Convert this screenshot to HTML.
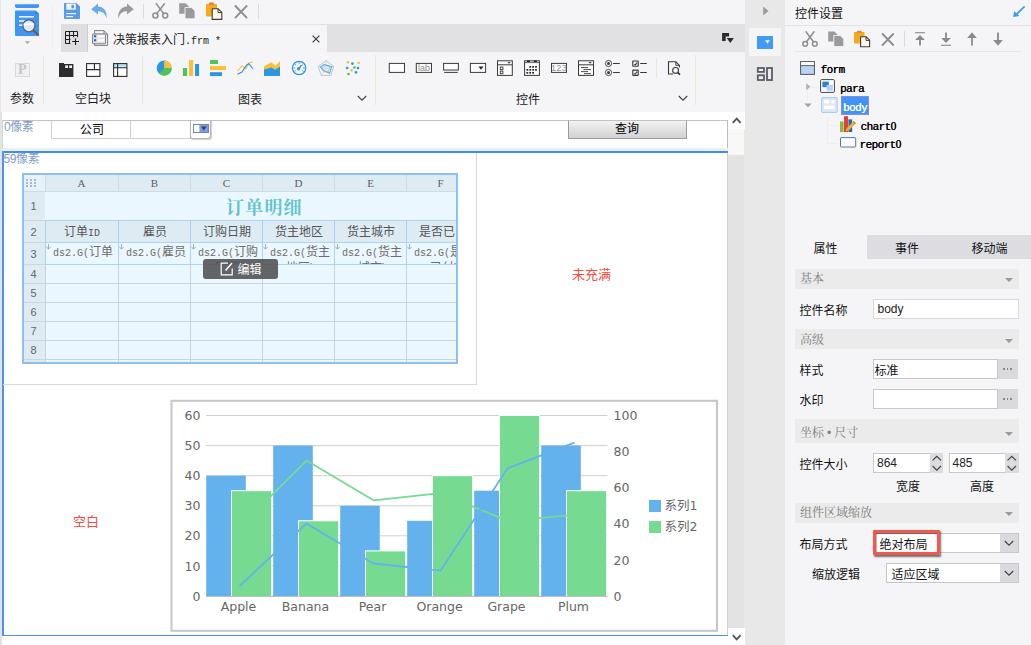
<!DOCTYPE html>
<html lang="zh-CN">
<head>
<meta charset="utf-8">
<title>决策报表入门.frm</title>
<style>
*{box-sizing:border-box;margin:0;padding:0}
html,body{width:1031px;height:645px;overflow:hidden;background:#f5f5f7}
body{position:relative;font-family:"Liberation Sans","Noto Sans CJK SC",sans-serif;font-size:12px;color:#1a1a1a}
.a{position:absolute}
.t{position:absolute;white-space:nowrap;line-height:1}
.cj{font-family:"Liberation Sans","Noto Sans CJK SC",sans-serif}
.sf{font-family:"Liberation Serif","Noto Serif CJK SC",serif}
.mono{font-family:"Liberation Mono","Noto Sans CJK SC",monospace}
svg{position:absolute;overflow:visible}
.vsep{position:absolute;width:1px;background:#ece8d8}
/* right panel */
.sec{position:absolute;left:795px;width:224px;height:19px;background:#ebebeb}
.sec span{position:absolute;left:5px;top:3.5px;font-family:"Liberation Serif","Noto Serif CJK SC",serif;color:#7e7e7e;font-size:12px;line-height:13px;white-space:nowrap}
.sec i{position:absolute;right:6px;top:9px;width:0;height:0;border-left:4px solid transparent;border-right:4px solid transparent;border-top:4px solid #9a9a9a}
.inp{position:absolute;background:#fff;border:1px solid #c8c8cc;height:20px}
.lab{position:absolute;white-space:nowrap;font-size:12px;line-height:14px;color:#111}
.btn3{position:absolute;background:#dadade;height:20px;width:19.5px}
/* report grid */
.gh{position:absolute;background:#deebf3;color:#555;font-size:11px;text-align:center}
</style>
</head>
<body>
<!-- ===== left edge strip ===== -->
<div class="a" style="left:0;top:0;width:1px;height:645px;background:#e6e6e8"></div>


<!-- ===== TOP BAR ===== -->
<!-- app logo -->
<svg style="left:14px;top:3px" width="28" height="44" viewBox="0 0 28 44">
  <path d="M1 1.2 H25 V3.2 a1.8 1.8 0 0 1 -1.8 1.8 H2.8 a1.8 1.8 0 0 1 -1.8 -1.8z" fill="#3f94f5"/>
  <path d="M1 8.5 a1 1 0 0 1 1-1 h19.5 l3.5 3.5 v21 a1 1 0 0 1-1 1 h-22 a1 1 0 0 1-1-1z" fill="#3f94f5"/>
  <path d="M21.5 7.5 l3.5 3.5 h-3.5z" fill="#2f78d6"/>
  <rect x="5" y="13" width="15" height="1.6" fill="#e8f2fe"/>
  <rect x="5" y="17.2" width="6" height="1.6" fill="#e8f2fe"/>
  <rect x="5" y="21.4" width="5" height="1.6" fill="#e8f2fe"/>
  <circle cx="14.9" cy="22.8" r="6" fill="#dcebfb" stroke="#5f6266" stroke-width="1.3"/>
  <rect x="9.6" y="20.4" width="10.6" height="1.8" fill="#ffffff"/>
  <path d="M19.6 27.6 l4.4 4" stroke="#5f6266" stroke-width="2.4" stroke-linecap="round"/>
  <path d="M10.6 38.2 h5.6 l-2.8 2.8z" fill="#a9a9ab"/>
</svg>
<div class="a" style="left:52px;top:5px;width:1px;height:42px;background:#eeeef0"></div>

<!-- save -->
<svg style="left:64px;top:3px" width="16" height="16" viewBox="0 0 16 16">
  <path d="M0.8 0 h11.6 l3.6 3.4 v11.8 a.8 .8 0 0 1-.8 .8 h-14.4 a.8 .8 0 0 1-.8-.8 v-14.4 a.8 .8 0 0 1 .8-.8z" fill="#5b9ce6"/>
  <rect x="2.3" y="0.6" width="9.4" height="6" fill="#f4f8fe"/>
  <rect x="7.4" y="1.8" width="2.6" height="3.6" fill="#5b9ce6"/>
  <rect x="2.2" y="10" width="9.8" height="1.2" fill="#f4f8fe"/>
  <rect x="2.2" y="13" width="6.8" height="1.2" fill="#f4f8fe"/>
</svg>
<!-- undo -->
<svg style="left:91px;top:3px" width="17" height="16" viewBox="0 0 17 16">
  <path d="M7 0.4 L0.2 6.2 L7 11.4 V8.2 C11.5 8.2 14.2 10.5 15.6 15.4 C16.6 8.6 12.8 4 7 3.6 Z" fill="#6aabeb"/>
</svg>
<!-- redo -->
<svg style="left:117px;top:3px" width="17" height="16" viewBox="0 0 17 16">
  <path d="M10 0.4 L16.8 6.2 L10 11.4 V8.2 C5.5 8.2 2.8 10.5 1.4 15.4 C0.4 8.6 4.2 4 10 3.6 Z" fill="#9b9b9d"/>
</svg>
<div class="a" style="left:143px;top:4px;width:1px;height:15px;background:#dcdcde"></div>
<!-- cut -->
<svg style="left:152px;top:3px" width="17" height="16" viewBox="0 0 17 16">
  <g fill="none" stroke="#8e8e90" stroke-width="1.5" stroke-linecap="round">
    <circle cx="3.4" cy="12.6" r="2.5"/><circle cx="13.2" cy="12.6" r="2.5"/>
    <path d="M4.8 10.6 L12.4 0.8"/><path d="M11.8 10.6 L4.2 0.8"/>
  </g>
</svg>
<!-- copy -->
<svg style="left:179px;top:3px" width="17" height="16" viewBox="0 0 17 16">
  <path d="M0.2 0.2 h6.4 l3 3 v7.6 h-9.4z" fill="#9a9a9c"/>
  <path d="M6 4.4 h6.6 l3.4 3.4 v8 h-10z" fill="#9a9a9c" stroke="#f5f5f7" stroke-width="0.9"/>
</svg>
<!-- paste -->
<svg style="left:205px;top:2px" width="18" height="18" viewBox="0 0 18 18">
  <rect x="1" y="2" width="11" height="12.6" rx="0.8" fill="#f4a91f"/>
  <rect x="4" y="0.6" width="5" height="2.2" rx="0.8" fill="#e97b3a"/>
  <path d="M7.2 6.8 h6 l3.6 3.6 v7 h-9.6z" fill="#fff8e8" stroke="#3c3c3c" stroke-width="1.1" stroke-linejoin="round"/>
  <path d="M13 6.8 v3.8 h3.8" fill="none" stroke="#3c3c3c" stroke-width="1"/>
</svg>
<!-- delete -->
<svg style="left:234px;top:5px" width="14" height="14" viewBox="0 0 14 14">
  <path d="M1.4 1 L12.6 12.6 M12.6 1 L1.4 12.6" stroke="#8e8e90" stroke-width="1.9" fill="none" stroke-linecap="round"/>
</svg>
<div class="a" style="left:258px;top:4px;width:1px;height:15px;background:#dcdcde"></div>


<!-- ===== TAB BAR ===== -->
<div class="a" style="left:61px;top:24px;width:684px;height:28px;background:#e1e1e3"></div>
<div class="a" style="left:61px;top:24px;width:27px;height:28px;background:#dedee0"></div>
<div class="a" style="left:88px;top:25px;width:239px;height:27px;background:#f5f5f7"></div>
<div class="a" style="left:87px;top:24px;width:1px;height:28px;background:#cdcdcf"></div>
<!-- grid+ icon -->
<svg style="left:65px;top:31px" width="15" height="15" viewBox="65 31 15 15">
  <g fill="none" stroke="#1e1e1e" stroke-width="1">
    <path d="M65.5 31.5 H77.5 V37.2 M65.5 31.5 V43.5 H70.4 M69.5 31.5 V43.5 M73.5 31.5 V37.2 M65.5 35.5 H77.5 M65.5 39.5 H70.4"/>
    <path d="M75.5 38.4 V45 M72.2 41.5 H79" stroke-width="1.1"/>
  </g>
</svg>
<!-- doc icon -->
<svg style="left:92px;top:30px" width="17" height="16" viewBox="92 30 17 16">
  <path d="M94.6 30.6 h9.4 l3.6 3.6 v11.2 h-13z" fill="#f6f6f6" stroke="#7c7c7c" stroke-width="1"/>
  <path d="M104 30.6 v3.6 h3.6" fill="none" stroke="#7c7c7c" stroke-width="0.9"/>
  <rect x="92.6" y="33.9" width="13" height="9.9" rx="0.6" fill="#e4e4e6" stroke="#7c7c7c" stroke-width="1"/>
  <rect x="97.6" y="35.2" width="6.8" height="2.2" fill="#fafafa"/>
  <rect x="97.6" y="39.3" width="6.8" height="2.2" fill="#fafafa"/>
  <rect x="94" y="35.2" width="2.2" height="2.1" fill="#1f63c9"/>
  <rect x="94" y="39.2" width="2.2" height="2.1" fill="#1f63c9"/>
</svg>
<div class="t" style="left:113px;top:32.7px;font-size:12px;line-height:14px;color:#222"><span class="cj">决策报表入门</span><span class="mono" style="font-size:10px;letter-spacing:0">.frm *</span></div>
<svg style="left:312px;top:34.5px" width="8" height="8" viewBox="0 0 8 8"><path d="M0.6 0.6 L7.4 7.4 M7.4 0.6 L0.6 7.4" stroke="#333" stroke-width="1.1" fill="none"/></svg>
<!-- tab list dropdown icon -->
<svg style="left:722px;top:33px" width="12" height="10" viewBox="0 0 12 10">
  <path d="M0.1 0 h7 v3.4 h-3.4 v4.5 h-3.6z" fill="#2b2b2b"/>
  <path d="M4.7 5 h7.2 l-3.6 5z" fill="#2b2b2b"/>
</svg>


<!-- ===== WIDGET BAR ===== -->
<!-- param P -->
<div class="a" style="left:15px;top:63px;width:15px;height:14px;border:1px solid #d9d9db;background:#f0f0f1"></div>
<div class="t sf" style="left:18px;top:63px;font-size:14px;line-height:14px;color:#c4c4c6;font-weight:700">P</div>
<div class="t cj" style="left:10px;top:92px;font-size:12px;line-height:14px">参数</div>
<div class="vsep" style="left:43px;top:55px;height:50px"></div>
<!-- blank block icons -->
<svg style="left:59px;top:63px" width="15" height="14" viewBox="0 0 15 14">
  <path d="M0 0 h5 v1 h9.4 v13 h-14.4z" fill="#2d2d2d"/>
  <rect x="6.2" y="2.4" width="2.8" height="2.6" fill="#f5f5f7"/><rect x="10.2" y="2.4" width="2.8" height="2.6" fill="#f5f5f7"/>
</svg>
<svg style="left:86px;top:63px" width="15" height="14" viewBox="0 0 15 14">
  <g fill="#fff" stroke="#2d2d2d" stroke-width="1.1"><rect x="0.6" y="0.6" width="13.3" height="12.8"/><path d="M0.6 6.6 H13.9 M8.4 0.6 V6.6" fill="none"/></g>
</svg>
<svg style="left:113px;top:63px" width="15" height="14" viewBox="0 0 15 14">
  <rect x="0.6" y="0.6" width="13.3" height="12.8" fill="#fff"/>
  <rect x="0.6" y="0.6" width="13.3" height="4.2" fill="#b9e6f8"/>
  <g fill="none" stroke="#2d2d2d" stroke-width="1.1"><rect x="0.6" y="0.6" width="13.3" height="12.8"/><path d="M0.6 4.8 H13.9 M4.6 0.6 V13.4"/></g>
</svg>
<div class="t cj" style="left:75px;top:92px;font-size:12px;line-height:14px">空白块</div>
<div class="vsep" style="left:142px;top:55px;height:50px"></div>

<!-- chart icons -->
<svg style="left:156px;top:60px" width="17" height="17" viewBox="0 0 17 17">
  <circle cx="8.2" cy="8" r="7.5" fill="#2b96e4"/>
  <path d="M8.2 8 L8.2 0.5 A7.5 7.5 0 0 1 15.7 8.4 Z" fill="#fbc035"/>
  <path d="M8.2 8 L15.7 8.4 A7.5 7.5 0 0 1 3.2 13.6 Z" fill="#4bc657"/>
</svg>
<svg style="left:182px;top:60px" width="18" height="17" viewBox="0 0 18 17">
  <rect x="0.9" y="8" width="4.2" height="8" fill="#4bc657"/><rect x="7" y="0" width="4.2" height="16" fill="#fbc035"/><rect x="13" y="4" width="4.1" height="12" fill="#2b96e4"/>
</svg>
<svg style="left:210px;top:60px" width="17" height="17" viewBox="0 0 17 17">
  <rect x="0" y="0" width="8" height="4" fill="#4bc657"/><rect x="0" y="6.1" width="16" height="4" fill="#fbc035"/><rect x="0" y="12.2" width="12" height="3.9" fill="#2b96e4"/>
</svg>
<svg style="left:237px;top:60px" width="17" height="17" viewBox="0 0 17 17">
  <path d="M0.4 11 L5 6 L9 8.6 L12 2.8 L16 2" fill="none" stroke="#fbc035" stroke-width="1.1"/>
  <path d="M0.4 14.2 L5 12 L9.6 5 L12 3.8 L16 9" fill="none" stroke="#2b96e4" stroke-width="1.1"/>
</svg>
<svg style="left:264px;top:60px" width="17" height="17" viewBox="0 0 17 17">
  <path d="M0 6.3 L7.6 2.3 L11.4 6 L16 1 V16 H0z" fill="#fbc035"/>
  <path d="M0 9.5 L7.6 7.4 L11 9.8 L16 6.4 V16 H0z" fill="#2b96e4"/>
</svg>
<svg style="left:291px;top:60px" width="17" height="17" viewBox="0 0 17 17">
  <circle cx="8.1" cy="8" r="6.7" fill="none" stroke="#2b96e4" stroke-width="1.2"/>
  <circle cx="7.6" cy="8.8" r="1.7" fill="#2b96e4"/>
  <path d="M7.8 8.6 L10.6 5" stroke="#2b96e4" stroke-width="1.3"/>
  <g stroke="#2b96e4" stroke-width="0.9"><path d="M2.4 8 h1.8 M12 8 h1.8 M8.1 2.2 v1.6 M3.8 4 l1.2 1.2 M12.4 4 l-1.2 1.2 M3.4 11.4 l1.4 -0.8 M12.8 11.4 l-1.4 -0.8"/></g>
</svg>
<svg style="left:318px;top:60px" width="17" height="17" viewBox="0 0 17 17">
  <g fill="none" stroke="#c6c6c8" stroke-width="1"><path d="M8 0.6 L15.8 6.4 L12.8 15.4 H3.2 L0.2 6.4 Z"/><path d="M8 5 L11.6 7.6 L10.2 11.8 H5.8 L4.4 7.6Z"/><path d="M8 8.6 L8 0.6 M8 8.6 L15.8 6.4 M8 8.6 L12.8 15.4 M8 8.6 L3.2 15.4 M8 8.6 L0.2 6.4" stroke-width="0.6"/></g>
  <path d="M6 4.6 L13.6 6.6 L11.6 13.2 L5.4 10.6 L2.6 6.8 Z" fill="none" stroke="#55b4f0" stroke-width="1.2"/>
</svg>
<svg style="left:346px;top:60px" width="16" height="17" viewBox="0 0 16 17">
  <g fill="#fbc035"><circle cx="2" cy="2.3" r="1.35"/><circle cx="12.8" cy="3" r="1.35"/><circle cx="5.6" cy="10.3" r="1.35"/></g>
  <g fill="#2b96e4"><circle cx="6.4" cy="3.6" r="1.35"/><circle cx="1.2" cy="8" r="1.35"/><circle cx="12" cy="8" r="1.35"/><circle cx="10" cy="12.3" r="1.35"/></g>
  <g fill="#4bc657"><circle cx="8.5" cy="7.5" r="1.35"/><circle cx="2.5" cy="14" r="1.35"/></g>
</svg>
<div class="t cj" style="left:238px;top:93px;font-size:12px;line-height:14px">图表</div>
<svg style="left:357px;top:95px" width="10" height="7" viewBox="0 0 10 7"><path d="M0.8 1 L5 5.2 L9.2 1" fill="none" stroke="#444" stroke-width="1.2"/></svg>
<div class="vsep" style="left:375px;top:55px;height:50px"></div>

<!-- widget icons -->
<svg style="left:388px;top:62px" width="18" height="12" viewBox="0 0 18 12"><rect x="1.3" y="1.4" width="15.2" height="9" fill="#fdfdfd" stroke="#3a3a3a" stroke-width="1"/></svg>
<svg style="left:415px;top:62px" width="18" height="12" viewBox="0 0 18 12"><rect x="1.3" y="1.4" width="15.2" height="9" fill="#fdfdfd" stroke="#3a3a3a" stroke-width="1"/>
  <text x="8.9" y="9" font-family="Liberation Sans, sans-serif" font-size="9" fill="#8e8e90" text-anchor="middle">lab</text></svg>
<svg style="left:442px;top:62px" width="18" height="12" viewBox="0 0 18 12"><rect x="1.6" y="1.4" width="14.8" height="6.6" fill="#fdfdfd" stroke="#3a3a3a" stroke-width="1"/><path d="M2.2 10.4 H15.8" stroke="#3a3a3a" stroke-width="1"/></svg>
<svg style="left:469px;top:62px" width="18" height="12" viewBox="0 0 18 12"><rect x="1.4" y="1.4" width="15.2" height="9" fill="#fdfdfd" stroke="#3a3a3a" stroke-width="1"/><path d="M9.4 4.6 h5.2 l-2.6 3.2z" fill="#2a2a2a"/></svg>
<svg style="left:496px;top:60px" width="18" height="17" viewBox="0 0 18 17">
  <rect x="1.5" y="0.8" width="14.8" height="14.6" fill="#fdfdfd" stroke="#3a3a3a" stroke-width="1"/>
  <path d="M1.5 4.8 H16.3" stroke="#3a3a3a" stroke-width="1"/><path d="M11.4 2 h3.2 l-1.6 1.7z" fill="#3a3a3a"/>
  <rect x="4.3" y="7.1" width="2.6" height="2.6" fill="none" stroke="#3a3a3a" stroke-width="0.9"/><rect x="4.3" y="11.1" width="2.6" height="2.6" fill="none" stroke="#3a3a3a" stroke-width="0.9"/>
</svg>
<svg style="left:523px;top:60px" width="18" height="17" viewBox="0 0 18 17">
  <rect x="1.6" y="0.8" width="14.8" height="14.6" fill="#fdfdfd" stroke="#3a3a3a" stroke-width="1"/>
  <path d="M1.6 2.6 H16.4" stroke="#3a3a3a" stroke-width="0.8"/>
  <path d="M4 1.2 h3 M10.8 1.2 h3" stroke="#222" stroke-width="1.4"/>
  <g fill="#2a2a2a"><rect x="6.3" y="6" width="1.8" height="1.7"/><rect x="9.2" y="6" width="1.8" height="1.7"/><rect x="12.1" y="6" width="1.8" height="1.7"/>
  <rect x="3.4" y="9" width="1.8" height="1.7"/><rect x="6.3" y="9" width="1.8" height="1.7"/><rect x="9.2" y="9" width="1.8" height="1.7"/><rect x="12.1" y="9" width="1.8" height="1.7"/>
  <rect x="3.4" y="12" width="1.8" height="1.7"/><rect x="6.3" y="12" width="1.8" height="1.7"/><rect x="9.2" y="12" width="1.8" height="1.7"/></g>
</svg>
<svg style="left:550px;top:62px" width="18" height="12" viewBox="0 0 18 12"><rect x="1.5" y="1.4" width="15" height="9" fill="#fdfdfd" stroke="#3a3a3a" stroke-width="1"/>
  <text x="9" y="9.2" font-family="Liberation Sans, sans-serif" font-size="9" fill="#8e8e90" text-anchor="middle" letter-spacing="0.3">123</text></svg>
<svg style="left:577px;top:60px" width="18" height="17" viewBox="0 0 18 17">
  <rect x="1.5" y="0.8" width="15" height="14.6" fill="#fdfdfd" stroke="#3a3a3a" stroke-width="1"/>
  <path d="M1.5 4.8 H16.5" stroke="#3a3a3a" stroke-width="1"/><path d="M11.6 2 h3.2 l-1.6 1.7z" fill="#3a3a3a"/>
  <path d="M4 7.6 H11 M6.4 9.6 H14 M4 11.6 H11 M7 13.6 H14" stroke="#3a3a3a" stroke-width="0.9"/>
</svg>
<svg style="left:604px;top:59px" width="18" height="18" viewBox="0 0 18 18">
  <g fill="none" stroke="#3a3a3a" stroke-width="0.9"><circle cx="4.5" cy="4.5" r="3.1"/><circle cx="4.5" cy="13.5" r="3.1"/><path d="M9 4.5 H15.8 M9 13.5 H15.8" stroke-width="1"/></g>
  <circle cx="4.5" cy="4.5" r="1.5" fill="#3a3a3a"/><circle cx="4.5" cy="13.5" r="1.5" fill="#3a3a3a"/>
</svg>
<svg style="left:631px;top:59px" width="18" height="18" viewBox="0 0 18 18">
  <g fill="none" stroke="#3a3a3a" stroke-width="1"><rect x="1.8" y="2" width="5.4" height="5.2" rx="0.2" stroke-width="1.15"/><rect x="1.8" y="11.1" width="5.4" height="5.2" rx="0.2" stroke-width="1.15"/><path d="M9.2 4.5 H15.8 M9.2 13.5 H15.8"/>
  <path d="M3.2 5.4 l1 0.6 l1.8 -2.4 M3.2 14.5 l1 0.6 l1.8 -2.4" stroke-width="1.1"/></g>
</svg>
<div class="vsep" style="left:656px;top:58px;height:20px"></div>
<svg style="left:667px;top:61px" width="15" height="15" viewBox="0 0 15 15">
  <path d="M6 13 H1.5 V0.8 H8.8 L12.4 4.4 V6.6" fill="none" stroke="#3a3a3a" stroke-width="1.1"/>
  <path d="M8.8 0.8 V4.4 H12.4" fill="none" stroke="#3a3a3a" stroke-width="0.9"/>
  <circle cx="8.6" cy="9.4" r="2.9" fill="#fdfdfd" stroke="#3a3a3a" stroke-width="1.1"/>
  <path d="M10.8 11.6 L13 13.6" stroke="#2a2a2a" stroke-width="1.5"/>
</svg>
<div class="t cj" style="left:516px;top:93px;font-size:12px;line-height:14px">控件</div>
<svg style="left:678px;top:95px" width="10" height="7" viewBox="0 0 10 7"><path d="M0.8 1 L5 5.2 L9.2 1" fill="none" stroke="#444" stroke-width="1.2"/></svg>
<div class="vsep" style="left:695px;top:55px;height:50px"></div>

<!-- ===== CANVAS ===== -->
<div class="a" style="left:1px;top:112px;width:744px;height:533px;background:#fff"></div>
<div class="a" style="left:0;top:112px;width:2px;height:533px;background:#e2e2e2"></div>
<div class="a" style="left:2px;top:120px;width:726px;height:1px;background:#c2c2c2"></div>
<div class="a" style="left:727px;top:120px;width:1px;height:516px;background:#d4d1c6"></div>
<div class="a" style="left:727px;top:120px;width:1px;height:32px;background:#bdbdbd"></div>
<div class="a" style="left:2px;top:120px;width:1px;height:31px;background:#d5d5d5"></div>
<div class="t cj" style="left:4px;top:120.5px;font-size:12px;line-height:13px;color:#7f9fc4;letter-spacing:-0.4px">0像素</div>
<div class="a" style="left:51px;top:120px;width:80px;height:19px;border:1px solid #d0d0d0;border-top-color:#c2c2c2;background:#fff"></div>
<div class="t cj" style="left:80px;top:122.5px;font-size:12px;line-height:14px;color:#000;font-weight:400">公司</div>
<div class="a" style="left:130px;top:120px;width:61px;height:19px;border:1px solid #d0d0d0;border-top-color:#c2c2c2;background:#fff"></div>
<div class="a" style="left:190px;top:120px;width:21px;height:19px;border:1px solid #b4b4b4;border-top-color:#c2c2c2;border-radius:0 0 3px 3px;background:#fff;box-shadow:0.5px 1px 1px rgba(0,0,0,.18)"></div>
<svg style="left:193px;top:124px" width="16" height="9" viewBox="0 0 16 9"><rect x="0.5" y="0.5" width="15" height="8" fill="#fff" stroke="#6f86b8" stroke-width="1"/><rect x="6.4" y="1" width="8.6" height="7" fill="#7f9bd8"/><path d="M8 2.6 h5.6 l-2.8 3.8z" fill="#283c80"/></svg>
<div class="a" style="left:568px;top:120px;width:119px;height:19px;border:1px solid #9c9c9c;border-top-color:#c2c2c2;background:linear-gradient(#f2f2f2,#d2d2d2)"></div>
<div class="t cj" style="left:615px;top:122px;font-size:12px;line-height:14px;color:#000">查询</div>
<div class="a" style="left:2px;top:148px;width:726px;height:3px;background:#e7f1fb"></div>
<div class="a" style="left:2px;top:151px;width:726px;height:2px;background:#3f8eee"></div>
<div class="a" style="left:2px;top:151px;width:1.5px;height:485px;background:#4d95ec"></div>
<div class="a" style="left:2px;top:635px;width:726px;height:1.3px;background:#4d95ec"></div>
<div class="t cj" style="left:3.5px;top:153px;font-size:12px;line-height:13px;color:#7f9fc4;letter-spacing:-0.4px">59像素</div>
<div class="a" style="left:476px;top:153px;width:1px;height:232px;background:#d9d9d9"></div>
<div class="a" style="left:3px;top:384px;width:474px;height:1px;background:#d9d9d9"></div>
<div class="t cj" style="left:572px;top:267.5px;font-size:13px;line-height:14px;color:#fb4a3c">未充满</div>
<div class="t cj" style="left:73px;top:514.5px;font-size:13px;line-height:14px;color:#fb4a3c">空白</div>
<div class="a" id="rep" style="left:22px;top:173px;width:436px;height:191px;background:#ebf7fe;overflow:hidden">
<div class="a" style="left:2px;top:2px;width:432px;height:16px;background:#deebf2"></div>
<div class="a" style="left:2px;top:2px;width:21px;height:16px;background:#e6f2fa"></div>
<div class="a" style="left:2px;top:18px;width:21px;height:172px;background:#deebf2"></div>
<div class="a" style="left:24px;top:48px;width:410px;height:21px;background:#deebf3"></div>
<div class="a" style="left:23px;top:2px;width:1px;height:16px;background:#cfdbe3"></div>
<div class="a" style="left:96px;top:2px;width:1px;height:16px;background:#cfdbe3"></div>
<div class="a" style="left:168px;top:2px;width:1px;height:16px;background:#cfdbe3"></div>
<div class="a" style="left:240px;top:2px;width:1px;height:16px;background:#cfdbe3"></div>
<div class="a" style="left:312px;top:2px;width:1px;height:16px;background:#cfdbe3"></div>
<div class="a" style="left:384px;top:2px;width:1px;height:16px;background:#cfdbe3"></div>
<div class="a" style="left:2px;top:18px;width:432px;height:1px;background:#cfdbe3"></div>
<div class="a" style="left:2px;top:47px;width:21px;height:1px;background:#cdd6dc"></div>
<div class="a" style="left:2px;top:69px;width:21px;height:1px;background:#cdd6dc"></div>
<div class="a" style="left:2px;top:91px;width:21px;height:1px;background:#cdd6dc"></div>
<div class="a" style="left:2px;top:110px;width:21px;height:1px;background:#cdd6dc"></div>
<div class="a" style="left:2px;top:129px;width:21px;height:1px;background:#cdd6dc"></div>
<div class="a" style="left:2px;top:148px;width:21px;height:1px;background:#cdd6dc"></div>
<div class="a" style="left:2px;top:167px;width:21px;height:1px;background:#cdd6dc"></div>
<div class="a" style="left:2px;top:186px;width:21px;height:1px;background:#cdd6dc"></div>
<div class="a" style="left:24px;top:110px;width:410px;height:1px;background:#ccd4d9"></div>
<div class="a" style="left:24px;top:129px;width:410px;height:1px;background:#ccd4d9"></div>
<div class="a" style="left:24px;top:148px;width:410px;height:1px;background:#ccd4d9"></div>
<div class="a" style="left:24px;top:167px;width:410px;height:1px;background:#ccd4d9"></div>
<div class="a" style="left:24px;top:186px;width:410px;height:1px;background:#ccd4d9"></div>
<div class="a" style="left:23px;top:92px;width:1px;height:98px;background:#ccd4d9"></div>
<div class="a" style="left:96px;top:92px;width:1px;height:98px;background:#ccd4d9"></div>
<div class="a" style="left:168px;top:92px;width:1px;height:98px;background:#ccd4d9"></div>
<div class="a" style="left:240px;top:92px;width:1px;height:98px;background:#ccd4d9"></div>
<div class="a" style="left:312px;top:92px;width:1px;height:98px;background:#ccd4d9"></div>
<div class="a" style="left:384px;top:92px;width:1px;height:98px;background:#ccd4d9"></div>
<div class="a" style="left:23px;top:47px;width:411px;height:1px;background:#a9d4f6"></div>
<div class="a" style="left:23px;top:69px;width:411px;height:1px;background:#a9d4f6"></div>
<div class="a" style="left:23px;top:91px;width:411px;height:1px;background:#a9d4f6"></div>
<div class="a" style="left:23px;top:47px;width:1px;height:45px;background:#a9d4f6"></div>
<div class="a" style="left:96px;top:47px;width:1px;height:45px;background:#a9d4f6"></div>
<div class="a" style="left:168px;top:47px;width:1px;height:45px;background:#a9d4f6"></div>
<div class="a" style="left:240px;top:47px;width:1px;height:45px;background:#a9d4f6"></div>
<div class="a" style="left:312px;top:47px;width:1px;height:45px;background:#a9d4f6"></div>
<div class="a" style="left:384px;top:47px;width:1px;height:45px;background:#a9d4f6"></div>
<div class="a" style="left:3.8px;top:6px;width:2px;height:1.8px;background:#a8b8c9"></div>
<div class="a" style="left:3.8px;top:9px;width:2px;height:1.8px;background:#a8b8c9"></div>
<div class="a" style="left:3.8px;top:12px;width:2px;height:1.8px;background:#a8b8c9"></div>
<div class="a" style="left:8px;top:6px;width:2px;height:1.8px;background:#a8b8c9"></div>
<div class="a" style="left:8px;top:9px;width:2px;height:1.8px;background:#a8b8c9"></div>
<div class="a" style="left:8px;top:12px;width:2px;height:1.8px;background:#a8b8c9"></div>
<div class="a" style="left:12.2px;top:6px;width:2px;height:1.8px;background:#a8b8c9"></div>
<div class="a" style="left:12.2px;top:9px;width:2px;height:1.8px;background:#a8b8c9"></div>
<div class="a" style="left:12.2px;top:12px;width:2px;height:1.8px;background:#a8b8c9"></div>
<div class="t sf" style="left:49.5px;top:4px;width:20px;text-align:center;font-size:11px;line-height:12px;color:#5e5e5e">A</div>
<div class="t sf" style="left:122.5px;top:4px;width:20px;text-align:center;font-size:11px;line-height:12px;color:#5e5e5e">B</div>
<div class="t sf" style="left:194.5px;top:4px;width:20px;text-align:center;font-size:11px;line-height:12px;color:#5e5e5e">C</div>
<div class="t sf" style="left:266.5px;top:4px;width:20px;text-align:center;font-size:11px;line-height:12px;color:#5e5e5e">D</div>
<div class="t sf" style="left:338.5px;top:4px;width:20px;text-align:center;font-size:11px;line-height:12px;color:#5e5e5e">E</div>
<div class="t sf" style="left:408.5px;top:4px;width:20px;text-align:center;font-size:11px;line-height:12px;color:#5e5e5e">F</div>
<div class="t" style="left:2.5px;top:27px;width:18px;text-align:center;font-size:11px;line-height:12px;color:#666;font-family:'Liberation Sans',sans-serif">1</div>
<div class="t" style="left:2.5px;top:52.5px;width:18px;text-align:center;font-size:11px;line-height:12px;color:#666;font-family:'Liberation Sans',sans-serif">2</div>
<div class="t" style="left:2.5px;top:74.5px;width:18px;text-align:center;font-size:11px;line-height:12px;color:#666;font-family:'Liberation Sans',sans-serif">3</div>
<div class="t" style="left:2.5px;top:95px;width:18px;text-align:center;font-size:11px;line-height:12px;color:#666;font-family:'Liberation Sans',sans-serif">4</div>
<div class="t" style="left:2.5px;top:114px;width:18px;text-align:center;font-size:11px;line-height:12px;color:#666;font-family:'Liberation Sans',sans-serif">5</div>
<div class="t" style="left:2.5px;top:133px;width:18px;text-align:center;font-size:11px;line-height:12px;color:#666;font-family:'Liberation Sans',sans-serif">6</div>
<div class="t" style="left:2.5px;top:152px;width:18px;text-align:center;font-size:11px;line-height:12px;color:#666;font-family:'Liberation Sans',sans-serif">7</div>
<div class="t" style="left:2.5px;top:171px;width:18px;text-align:center;font-size:11px;line-height:12px;color:#666;font-family:'Liberation Sans',sans-serif">8</div>
<div class="t sf" style="left:204px;top:24.5px;font-size:18px;line-height:20px;color:#5fc4cd;font-weight:700;letter-spacing:1.2px">订单明细</div>
<div class="t cj" style="left:24px;top:52px;width:72px;text-align:center;font-size:12px;line-height:14px;color:#555">订单<span class="mono" style="font-size:10px">ID</span></div>
<div class="t cj" style="left:97px;top:52px;width:72px;text-align:center;font-size:12px;line-height:14px;color:#555">雇员</div>
<div class="t cj" style="left:169px;top:52px;width:72px;text-align:center;font-size:12px;line-height:14px;color:#555">订购日期</div>
<div class="t cj" style="left:241px;top:52px;width:72px;text-align:center;font-size:12px;line-height:14px;color:#555">货主地区</div>
<div class="t cj" style="left:313px;top:52px;width:72px;text-align:center;font-size:12px;line-height:14px;color:#555">货主城市</div>
<div class="t cj" style="left:397px;top:52px;width:36px;overflow:hidden;font-size:12px;line-height:14px;color:#555">是否已付</div>
<div class="a" style="left:24px;top:70px;width:72px;height:21px;overflow:hidden"><div class="t" style="left:1px;top:1.5px;width:72px;text-align:center;font-size:12px;line-height:14px;color:#6d6d6d;white-space:normal"><span class="mono" style="font-size:10px">ds2.G(</span><span class="cj">订单</span><br><span class="mono" style="font-size:10px">ID)</span></div></div>
<svg style="left:24px;top:70.5px" width="5" height="6" viewBox="0 0 5 6"><path d="M2.5 0 V5 M0.4 2.8 L2.5 5.2 L4.6 2.8" fill="none" stroke="#9a9a9a" stroke-width="0.8"/></svg>
<div class="a" style="left:97px;top:70px;width:72px;height:21px;overflow:hidden"><div class="t" style="left:1px;top:1.5px;width:72px;text-align:center;font-size:12px;line-height:14px;color:#6d6d6d;white-space:normal"><span class="mono" style="font-size:10px">ds2.G(</span><span class="cj">雇员</span><br><span class="mono" style="font-size:10px">ID)</span></div></div>
<svg style="left:97px;top:70.5px" width="5" height="6" viewBox="0 0 5 6"><path d="M2.5 0 V5 M0.4 2.8 L2.5 5.2 L4.6 2.8" fill="none" stroke="#9a9a9a" stroke-width="0.8"/></svg>
<div class="a" style="left:169px;top:70px;width:72px;height:21px;overflow:hidden"><div class="t" style="left:1px;top:1.5px;width:72px;text-align:center;font-size:12px;line-height:14px;color:#6d6d6d;white-space:normal"><span class="mono" style="font-size:10px">ds2.G(</span><span class="cj">订购</span><br><span class="cj">日期)</span></div></div>
<svg style="left:169px;top:70.5px" width="5" height="6" viewBox="0 0 5 6"><path d="M2.5 0 V5 M0.4 2.8 L2.5 5.2 L4.6 2.8" fill="none" stroke="#9a9a9a" stroke-width="0.8"/></svg>
<div class="a" style="left:241px;top:70px;width:72px;height:21px;overflow:hidden"><div class="t" style="left:1px;top:1.5px;width:72px;text-align:center;font-size:12px;line-height:14px;color:#6d6d6d;white-space:normal"><span class="mono" style="font-size:10px">ds2.G(</span><span class="cj">货主</span><br><span class="cj">地区)</span></div></div>
<svg style="left:241px;top:70.5px" width="5" height="6" viewBox="0 0 5 6"><path d="M2.5 0 V5 M0.4 2.8 L2.5 5.2 L4.6 2.8" fill="none" stroke="#9a9a9a" stroke-width="0.8"/></svg>
<div class="a" style="left:313px;top:70px;width:72px;height:21px;overflow:hidden"><div class="t" style="left:1px;top:1.5px;width:72px;text-align:center;font-size:12px;line-height:14px;color:#6d6d6d;white-space:normal"><span class="mono" style="font-size:10px">ds2.G(</span><span class="cj">货主</span><br><span class="cj">城市)</span></div></div>
<svg style="left:313px;top:70.5px" width="5" height="6" viewBox="0 0 5 6"><path d="M2.5 0 V5 M0.4 2.8 L2.5 5.2 L4.6 2.8" fill="none" stroke="#9a9a9a" stroke-width="0.8"/></svg>
<div class="a" style="left:385px;top:70px;width:72px;height:21px;overflow:hidden"><div class="t" style="left:1px;top:1.5px;width:72px;text-align:center;font-size:12px;line-height:14px;color:#6d6d6d;white-space:normal"><span class="mono" style="font-size:10px">ds2.G(</span><span class="cj">是否</span><br><span class="cj">已付)</span></div></div>
<svg style="left:385px;top:70.5px" width="5" height="6" viewBox="0 0 5 6"><path d="M2.5 0 V5 M0.4 2.8 L2.5 5.2 L4.6 2.8" fill="none" stroke="#9a9a9a" stroke-width="0.8"/></svg>
<div class="a" style="left:0;top:0;width:436px;height:191px;border:2.3px solid #8fbff2"></div>
<div class="a" style="left:181px;top:86px;width:75px;height:20px;background:rgba(78,80,82,.88);border-radius:3px"></div>
<svg style="left:197.5px;top:89px" width="14" height="14" viewBox="0 0 14 14"><path d="M8 1.2 H1.2 V12.8 H12.2 V6.4" fill="none" stroke="#fff" stroke-width="1.2"/><path d="M5.6 8.6 L12 1" stroke="#fff" stroke-width="1.5"/></svg>
<div class="t cj" style="left:215.5px;top:90px;font-size:12px;line-height:14px;color:#fff">编辑</div>
</div>
<div class="a" style="left:728px;top:129px;width:16px;height:499px;background:#e3e3e3"></div>
<div class="a" style="left:744px;top:112px;width:1px;height:533px;background:#ece9e0"></div>
<div class="a" style="left:728px;top:129px;width:16px;height:26px;background:#f8f8f6"></div>
<div class="a" style="left:728px;top:112px;width:17px;height:17px;background:#fff"></div>
<div class="a" style="left:728px;top:628px;width:17px;height:17px;background:#fff"></div>
<svg style="left:732px;top:117px" width="10" height="7" viewBox="0 0 10 7"><path d="M0.8 5.8 L4.7 1.6 L8.6 5.8" fill="none" stroke="#555" stroke-width="1.8"/></svg>
<svg style="left:732px;top:634px" width="10" height="7" viewBox="0 0 10 7"><path d="M0.8 1.2 L4.7 5.4 L8.6 1.2" fill="none" stroke="#555" stroke-width="1.8"/></svg>
<!-- ===== CHART ===== -->
<svg style="left:170px;top:399px" width="549" height="234" viewBox="170 399 549 234" font-family="'DejaVu Sans','Liberation Sans',sans-serif">
<rect x="171.5" y="400.8" width="545.5" height="230" fill="#fff" stroke="#c6c6c6" stroke-width="2"/>
<path d="M206 596.0 H607.5" stroke="#bdbdbd" stroke-width="1"/>
<text x="200.5" y="600.6" font-size="12.5" fill="#666" text-anchor="end">0</text>
<path d="M206 565.9 H607.5" stroke="#cfcfcf" stroke-width="1"/>
<text x="200.5" y="570.5" font-size="12.5" fill="#666" text-anchor="end">10</text>
<path d="M206 535.8 H607.5" stroke="#cfcfcf" stroke-width="1"/>
<text x="200.5" y="540.4" font-size="12.5" fill="#666" text-anchor="end">20</text>
<path d="M206 505.8 H607.5" stroke="#cfcfcf" stroke-width="1"/>
<text x="200.5" y="510.4" font-size="12.5" fill="#666" text-anchor="end">30</text>
<path d="M206 475.7 H607.5" stroke="#cfcfcf" stroke-width="1"/>
<text x="200.5" y="480.3" font-size="12.5" fill="#666" text-anchor="end">40</text>
<path d="M206 445.6 H607.5" stroke="#cfcfcf" stroke-width="1"/>
<text x="200.5" y="450.2" font-size="12.5" fill="#666" text-anchor="end">50</text>
<path d="M206 415.5 H607.5" stroke="#cfcfcf" stroke-width="1"/>
<text x="200.5" y="420.1" font-size="12.5" fill="#666" text-anchor="end">60</text>
<text x="613.5" y="600.6" font-size="12.5" fill="#666">0</text>
<text x="613.5" y="564.5" font-size="12.5" fill="#666">20</text>
<text x="613.5" y="528.4" font-size="12.5" fill="#666">40</text>
<text x="613.5" y="492.3" font-size="12.5" fill="#666">60</text>
<text x="613.5" y="456.2" font-size="12.5" fill="#666">80</text>
<text x="613.5" y="420.1" font-size="12.5" fill="#666">100</text>
<rect x="206.2" y="475.7" width="39.6" height="120.3" fill="#63b2ee"/>
<rect x="273.2" y="445.6" width="39.6" height="150.4" fill="#63b2ee"/>
<rect x="340.2" y="505.8" width="39.6" height="90.2" fill="#63b2ee"/>
<rect x="407.2" y="520.8" width="39.6" height="75.2" fill="#63b2ee"/>
<rect x="474.2" y="490.7" width="39.6" height="105.3" fill="#63b2ee"/>
<rect x="541.2" y="445.6" width="39.6" height="150.4" fill="#63b2ee"/>
<rect x="231.5" y="490.7" width="40.2" height="105.8" fill="#76da91" stroke="#fff" stroke-width="1"/>
<rect x="298.5" y="520.8" width="40.2" height="75.7" fill="#76da91" stroke="#fff" stroke-width="1"/>
<rect x="365.5" y="550.9" width="40.2" height="45.6" fill="#76da91" stroke="#fff" stroke-width="1"/>
<rect x="432.5" y="475.7" width="40.2" height="120.8" fill="#76da91" stroke="#fff" stroke-width="1"/>
<rect x="499.5" y="415.5" width="40.2" height="181.0" fill="#76da91" stroke="#fff" stroke-width="1"/>
<rect x="566.5" y="490.7" width="40.2" height="105.8" fill="#76da91" stroke="#fff" stroke-width="1"/>
<path d="M206 596.5 H607.5" stroke="#bdbdbd" stroke-width="1"/>
<polyline points="239.5,527.4 306.5,460.6 373.5,500.3 440.5,493.1 507.5,520.9 574.5,514.8" fill="none" stroke="#76da91" stroke-width="1.8" stroke-linejoin="round"/>
<polyline points="239.5,586.1 306.5,523.4 373.5,563.5 440.5,570.7 507.5,468.4 574.5,442.6" fill="none" stroke="#63b2ee" stroke-width="1.8" stroke-linejoin="round"/>
<text x="238.5" y="611" font-size="12.5" fill="#666" text-anchor="middle">Apple</text>
<text x="305.5" y="611" font-size="12.5" fill="#666" text-anchor="middle">Banana</text>
<text x="372.5" y="611" font-size="12.5" fill="#666" text-anchor="middle">Pear</text>
<text x="439.5" y="611" font-size="12.5" fill="#666" text-anchor="middle">Orange</text>
<text x="506.5" y="611" font-size="12.5" fill="#666" text-anchor="middle">Grape</text>
<text x="573.5" y="611" font-size="12.5" fill="#666" text-anchor="middle">Plum</text>
<rect x="649" y="500" width="12" height="12" fill="#63b2ee"/><rect x="649" y="521" width="12" height="12" fill="#76da91"/>
<text x="664.5" y="509.8" font-size="12.5" fill="#666" font-family="'DejaVu Sans','Noto Sans CJK SC',sans-serif">系列1</text>
<text x="664.5" y="530.8" font-size="12.5" fill="#666" font-family="'DejaVu Sans','Noto Sans CJK SC',sans-serif">系列2</text>
</svg>
<!-- ===== SIDE COLUMN ===== -->
<div class="a" style="left:745px;top:0;width:40px;height:645px;background:#e8e8e8"></div>
<div class="a" style="left:749px;top:28px;width:32px;height:28px;background:#f5f5f7"></div>
<svg style="left:763px;top:6px" width="6" height="10" viewBox="0 0 6 10"><path d="M0.2 0.4 L5.6 5 L0.2 9.6z" fill="#9c9c9c"/></svg>
<div class="a" style="left:756.5px;top:36px;width:16.5px;height:12.5px;background:#3f9af8"></div>
<svg style="left:765px;top:40px" width="5" height="4" viewBox="0 0 5 4"><path d="M0.1 0.2 H4.9 L2.5 3.8z" fill="#fff"/></svg>
<svg style="left:756px;top:66px" width="18" height="16" viewBox="756 66 18 16"><g fill="#ececec" stroke="#5a5d68" stroke-width="1.8"><rect x="757.8" y="68" width="6.2" height="3.9"/><rect x="757.8" y="75.3" width="6.2" height="4.7"/><rect x="767" y="68" width="5" height="12"/></g></svg>
<!-- ===== RIGHT PANEL ===== -->
<div class="t cj" style="left:795px;top:7px;font-size:12px;line-height:15px;color:#111">控件设置</div>
<svg style="left:1012px;top:5px" width="14" height="13" viewBox="0 0 14 13"><path d="M12.6 1.4 L4 9.8" stroke="#3d9af5" stroke-width="1.7" fill="none"/><path d="M1.2 12 L2.2 6 L7.4 11z" fill="#3d9af5"/></svg>
<div class="a" style="left:785px;top:25px;width:246px;height:1px;background:#e3e3e5"></div>
<svg style="left:802px;top:31px" width="17" height="16" viewBox="0 0 17 16"><g fill="none" stroke="#8e8e90" stroke-width="1.5" stroke-linecap="round"><circle cx="3.2" cy="12.8" r="2.4"/><circle cx="12.8" cy="12.8" r="2.4"/><path d="M4.6 10.8 L12 0.8"/><path d="M11.4 10.8 L4 0.8"/></g></svg>
<svg style="left:828px;top:31px" width="17" height="16" viewBox="0 0 17 16"><path d="M0.2 0.4 h6.2 l2.8 2.8 v7.4 h-9z" fill="#9a9a9c"/><path d="M5.8 4.4 h6.4 l3.6 3.6 v7.6 h-10z" fill="#9a9a9c" stroke="#f5f5f7" stroke-width="0.9"/></svg>
<svg style="left:853px;top:30px" width="18" height="18" viewBox="0 0 18 18"><rect x="1" y="2" width="10.6" height="11.4" rx="0.8" fill="#f4a91f"/><rect x="4" y="0.8" width="4.6" height="2" rx="0.8" fill="#e97b3a"/><path d="M7.6 6.8 h5.6 l3.4 3.4 v6.6 h-9z" fill="#fff8e8" stroke="#3c3c3c" stroke-width="1.1" stroke-linejoin="round"/><path d="M13 6.8 v3.6 h3.6" fill="none" stroke="#3c3c3c" stroke-width="1"/></svg>
<svg style="left:881px;top:33px" width="14" height="13" viewBox="0 0 14 13"><path d="M1.6 1 L12.2 12 M12.2 1 L1.6 12" stroke="#8e8e90" stroke-width="1.9" fill="none" stroke-linecap="round"/></svg>
<div class="a" style="left:904px;top:31px;width:1px;height:16px;background:#dcdcde"></div>
<svg style="left:915px;top:32px" width="10" height="14" viewBox="0 0 10 14"><path d="M0 0.7 H10" stroke="#8a8a8c" stroke-width="1.1"/><path d="M5 3 L9.8 8 H0.2z" fill="#8a8a8c"/><path d="M5 6 V13.6" stroke="#8a8a8c" stroke-width="1.8"/></svg>
<svg style="left:941px;top:32px" width="10" height="14" viewBox="0 0 10 14"><path d="M0 13.3 H10" stroke="#8a8a8c" stroke-width="1.1"/><path d="M5 11 L9.8 6 H0.2z" fill="#8a8a8c"/><path d="M5 0.4 V8" stroke="#8a8a8c" stroke-width="1.8"/></svg>
<svg style="left:967px;top:32px" width="10" height="14" viewBox="0 0 10 14"><path d="M5 0.2 L9.8 6 H0.2z" fill="#8a8a8c"/><path d="M5 4 V13.6" stroke="#8a8a8c" stroke-width="1.8"/></svg>
<svg style="left:992.5px;top:32px" width="10" height="14" viewBox="0 0 10 14"><path d="M5 13.8 L9.8 8 H0.2z" fill="#8a8a8c"/><path d="M5 0.4 V10" stroke="#8a8a8c" stroke-width="1.8"/></svg>
<div class="a" style="left:795px;top:51px;width:226px;height:1px;background:#e6e6e8"></div>
<div class="a" style="left:807px;top:77px;width:1px;height:24px;background:#eeeef0"></div>
<div class="a" style="left:812px;top:87px;width:7px;height:1px;background:#eeeef0"></div>
<div class="a" style="left:827px;top:115px;width:1px;height:29px;background:#eeeef0"></div>
<div class="a" style="left:827px;top:125px;width:11px;height:1px;background:#eeeef0"></div>
<div class="a" style="left:827px;top:143px;width:11px;height:1px;background:#eeeef0"></div>
<svg style="left:800px;top:61px" width="15" height="14" viewBox="0 0 15 14"><rect x="0.6" y="0.6" width="13.8" height="12.8" fill="#b9d3f6" stroke="#555" stroke-width="1"/><rect x="1.1" y="1.1" width="12.8" height="3.2" fill="#fff"/><path d="M0.6 4.6 H14.4" stroke="#555" stroke-width="0.9"/></svg>
<div class="t" style="left:820.5px;top:63.5px;font-family:'Liberation Mono',monospace;font-weight:400;font-size:11px;letter-spacing:-0.6px;line-height:12px;text-shadow:0.35px 0 0 currentColor;color:#000">form</div>
<svg style="left:806px;top:83px" width="5" height="8" viewBox="0 0 5 8"><path d="M0.2 0.3 L4.6 3.7 L0.2 7.2z" fill="#b4b4b4"/></svg>
<svg style="left:820px;top:79px" width="15" height="14" viewBox="0 0 15 14"><rect x="0.6" y="0.6" width="13.8" height="12.8" rx="1" fill="#fff" stroke="#444" stroke-width="1"/><rect x="2.4" y="2.6" width="6.4" height="5.6" fill="#2f80cc"/><rect x="6.6" y="6" width="6.2" height="5.8" fill="#b9d0f6"/></svg>
<div class="t" style="left:840px;top:82.5px;font-family:'Liberation Mono',monospace;font-weight:400;font-size:11px;letter-spacing:-0.6px;line-height:12px;text-shadow:0.35px 0 0 currentColor;color:#000">para</div>
<svg style="left:804px;top:103px" width="8" height="5" viewBox="0 0 8 5"><path d="M0.3 0.4 H7.6 L4 4.4z" fill="#a4a4a4"/></svg>
<svg style="left:820.5px;top:97px" width="17" height="16" viewBox="0 0 17 16"><rect x="0.6" y="0.6" width="15.6" height="14.8" rx="0.8" fill="#dde8f2" stroke="#a6c8ea" stroke-width="1"/><rect x="3" y="3.2" width="5.4" height="3.2" fill="#fff"/><rect x="10.4" y="3.2" width="3.2" height="3.2" fill="#fff"/><rect x="3" y="8.6" width="10.6" height="3.6" fill="#fff"/></svg>
<div class="a" style="left:841px;top:95.5px;width:28px;height:19.5px;background:#3f95f7;border:1px solid #8c8cd6"></div>
<div class="t" style="left:843px;top:101.5px;font-family:'Liberation Mono',monospace;font-weight:400;font-size:11px;letter-spacing:-0.6px;line-height:12px;text-shadow:0.35px 0 0 currentColor;color:#fff">body</div>
<svg style="left:840px;top:116px" width="17" height="16" viewBox="0 0 17 16"><rect x="0" y="5.4" width="3.6" height="10.6" fill="#8fb73e"/><rect x="4" y="0.2" width="4" height="15.8" fill="#e0423a"/><rect x="8.4" y="3.4" width="3.8" height="12.6" fill="#1f6fae"/><path d="M13.8 5 L16 7.2 L8.6 14.6 L5.6 15.6 L6.4 12.4z" fill="#f5a93a"/><path d="M13.8 5 L16 7.2 L14.8 8.4 L12.6 6.2z" fill="#ee7b4a"/></svg>
<div class="t" style="left:860.5px;top:119.5px;font-family:'Liberation Mono',monospace;font-weight:400;font-size:11px;letter-spacing:-0.6px;line-height:12px;text-shadow:0.35px 0 0 currentColor;color:#000">chart<span style="font-family:'Liberation Serif',serif;font-size:11.5px;letter-spacing:0">0</span></div>
<svg style="left:840px;top:137px" width="17" height="11" viewBox="0 0 17 11"><rect x="0.5" y="0.6" width="15.2" height="9.4" rx="0.6" fill="#fff" stroke="#5675ae" stroke-width="1"/></svg>
<div class="t" style="left:859.5px;top:138px;font-family:'Liberation Mono',monospace;font-weight:400;font-size:11px;letter-spacing:-0.6px;line-height:12px;text-shadow:0.35px 0 0 currentColor;color:#000">report<span style="font-family:'Liberation Serif',serif;font-size:11.5px;letter-spacing:0">0</span></div>
<div class="a" style="left:785px;top:235px;width:246px;height:24px;background:#dddde1"></div>
<div class="a" style="left:785px;top:235px;width:82px;height:24px;background:#f5f5f7"></div>
<div class="t cj" style="left:813.5px;top:242px;font-size:12px;line-height:14px;color:#111">属性</div>
<div class="t cj" style="left:895px;top:242px;font-size:12px;line-height:14px;color:#111">事件</div>
<div class="t cj" style="left:971.5px;top:242px;font-size:12px;line-height:14px;color:#111">移动端</div>
<div class="sec" style="top:269px;height:19.6px"><span>基本</span><i></i></div>
<div class="lab cj" style="left:799.5px;top:304px">控件名称</div>
<div class="inp" style="left:873px;top:299px;width:146px;border-color:#d9d9dd"></div>
<div class="t" style="left:877.5px;top:302px;font-size:12px;line-height:14px;color:#222">body</div>
<div class="sec" style="top:329px;height:20px"><span style="top:4.5px">高级</span><i style="top:10px"></i></div>
<div class="lab cj" style="left:799.5px;top:364px">样式</div>
<div class="inp" style="left:873px;top:359px;width:125px"></div>
<div class="t cj" style="left:874.5px;top:363.5px;font-size:12px;line-height:14px;color:#111">标准</div>
<div class="btn3" style="left:998px;top:359px"></div>
<div class="lab cj" style="left:799.5px;top:394px">水印</div>
<div class="inp" style="left:873px;top:389px;width:125px"></div>
<div class="btn3" style="left:998px;top:389px"></div>
<div class="a" style="left:1003.2px;top:368.2px;width:1.7px;height:1.7px;background:#88888c"></div>
<div class="a" style="left:1006.8px;top:368.2px;width:1.7px;height:1.7px;background:#88888c"></div>
<div class="a" style="left:1010.4px;top:368.2px;width:1.7px;height:1.7px;background:#88888c"></div>
<div class="a" style="left:1003.2px;top:398.4px;width:1.7px;height:1.7px;background:#88888c"></div>
<div class="a" style="left:1006.8px;top:398.4px;width:1.7px;height:1.7px;background:#88888c"></div>
<div class="a" style="left:1010.4px;top:398.4px;width:1.7px;height:1.7px;background:#88888c"></div>
<div class="sec" style="top:419px;height:23.5px"><span style="top:7.5px">坐标 <b style="font-weight:400;font-family:'Liberation Sans',sans-serif">•</b> 尺寸</span><i style="top:13px"></i></div>
<div class="lab cj" style="left:799.5px;top:457.5px">控件大小</div>
<div class="inp" style="left:873px;top:453px;width:69px"></div>
<div class="inp" style="left:948.5px;top:453px;width:70.5px"></div>
<div class="t" style="left:877px;top:456px;font-size:12px;line-height:14px;color:#222">864</div>
<div class="t" style="left:952.5px;top:456px;font-size:12px;line-height:14px;color:#222">485</div>
<div class="a" style="left:929.5px;top:453px;width:13.5px;height:20px;background:#dcdce0"></div>
<svg style="left:931.5px;top:455px" width="10" height="16" viewBox="0 0 10 16"><path d="M0.6 5.4 L4.8 1.3 L9 5.4 M0.6 11 L4.8 15.1 L9 11" fill="none" stroke="#444" stroke-width="1.2"/></svg>
<div class="a" style="left:1005.3px;top:453px;width:13.5px;height:20px;background:#dcdce0"></div>
<svg style="left:1007.3px;top:455px" width="10" height="16" viewBox="0 0 10 16"><path d="M0.6 5.4 L4.8 1.3 L9 5.4 M0.6 11 L4.8 15.1 L9 11" fill="none" stroke="#444" stroke-width="1.2"/></svg>
<div class="t cj" style="left:896px;top:479.5px;font-size:12px;line-height:14px;color:#111">宽度</div>
<div class="t cj" style="left:970px;top:479.5px;font-size:12px;line-height:14px;color:#111">高度</div>
<div class="sec" style="top:503px;height:19.6px"><span>组件区域缩放</span><i></i></div>
<div class="lab cj" style="left:799.5px;top:538px">布局方式</div>
<div class="inp" style="left:874px;top:533px;width:145px"></div>
<div class="a" style="left:999.5px;top:534px;width:18.5px;height:18px;background:#dadade"></div>
<svg style="left:1004px;top:540px" width="10" height="7" viewBox="0 0 10 7"><path d="M0.8 1 L5 5.2 L9.2 1" fill="none" stroke="#444" stroke-width="1.2"/></svg>
<div class="t cj" style="left:879.5px;top:538px;font-size:12px;line-height:14px;color:#111">绝对布局</div>
<div class="a" style="left:873px;top:530px;width:67.2px;height:25px;border:3px solid #f2594c;border-radius:1px;box-shadow:1px 1.5px 2px rgba(0,0,0,.55), inset 0 1px 1px rgba(0,0,0,.5), inset 1px 0 1px rgba(0,0,0,.25)"></div>
<div class="lab cj" style="left:812px;top:568px">缩放逻辑</div>
<div class="inp" style="left:885.5px;top:563px;width:133.5px"></div>
<div class="a" style="left:999.5px;top:564px;width:18.5px;height:18px;background:#dadade"></div>
<svg style="left:1004px;top:570px" width="10" height="7" viewBox="0 0 10 7"><path d="M0.8 1 L5 5.2 L9.2 1" fill="none" stroke="#444" stroke-width="1.2"/></svg>
<div class="t cj" style="left:891.5px;top:568px;font-size:12px;line-height:14px;color:#111">适应区域</div>

</body>
</html>
